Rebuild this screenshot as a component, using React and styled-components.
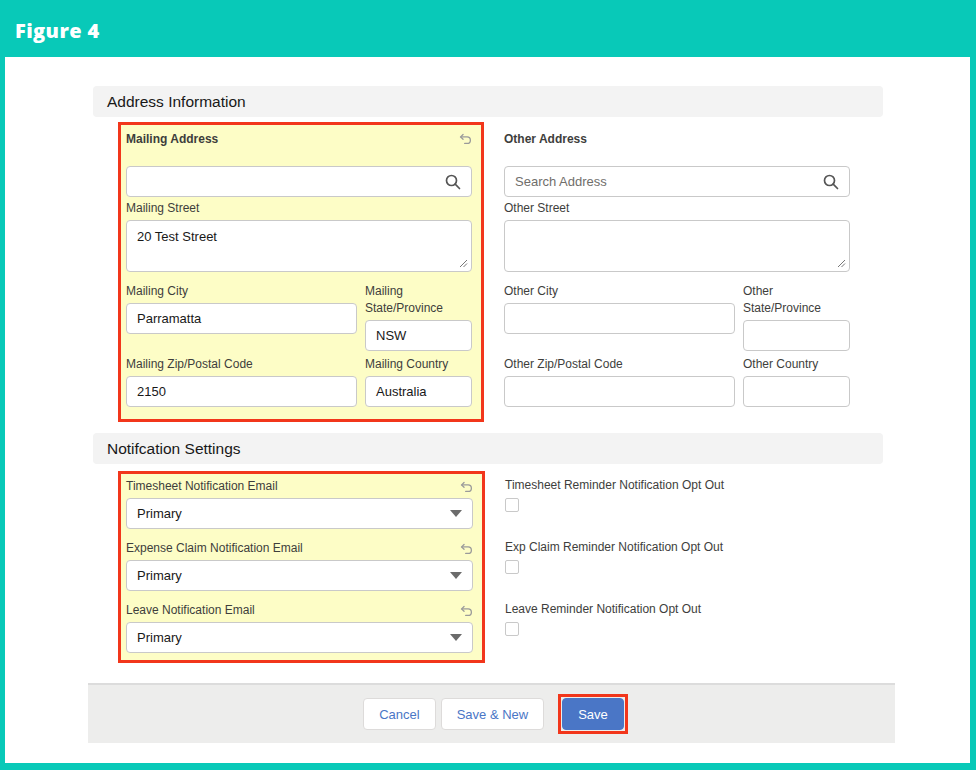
import React from 'react';
import styled, {createGlobalStyle, css} from 'styled-components';

const TEAL = '#08c9b8';
const RED = '#f2361b';

const Global = createGlobalStyle`
  html, body { margin: 0; padding: 0; background: #fff; }
  body { font-family: "Liberation Sans", Arial, sans-serif; color: #3e3e3c; }
`;

const Frame = styled.div`
  width: 976px;
  height: 770px;
  box-sizing: border-box;
  background: ${TEAL};
  padding: 4px 6px 7px 5px;
  display: flex;
  flex-direction: column;
`;

const FigureTitle = styled.div`
  height: 53px;
  padding-left: 10px;
  display: flex;
  align-items: center;
  color: #fff;
  font-family: "Open Sans", sans-serif;
  font-weight: 800;
  font-size: 20px;
  letter-spacing: 0.4px;
`;

const Sheet = styled.div`
  flex: 1;
  background: #fff;
  padding: 29px 0 0 83px;
`;

const Form = styled.div`
  width: 799px;
  display: flex;
  flex-direction: column;
`;

const SectionHead = styled.div`
  margin: 0 4px 0 5px;
  height: 31px;
  border-radius: 4px;
  background: #f3f3f3;
  display: flex;
  align-items: center;
  padding-left: 14px;
  font-size: 15.5px;
  color: #181818;
`;

const Columns = styled.div`
  display: flex;
  align-items: flex-start;
  gap: 20px;
  padding: ${({$pt}) => $pt}px 0 0 30px;
  margin-bottom: ${({$mb}) => $mb}px;
`;

const Box = styled.div`
  box-sizing: border-box;
  width: ${({$w}) => $w}px;
  padding: ${({$pt}) => $pt}px 9px ${({$pb}) => $pb}px 5px;
  border: 3px solid transparent;
  ${({$hl}) => $hl && css`
    background: #fdfdc6;
    border-color: ${RED};
  `}
`;

const PlainCol = styled.div`
  box-sizing: border-box;
  width: ${({$w}) => $w}px;
  padding-top: ${({$pt}) => $pt}px;
`;

const HeadRow = styled.div`
  height: 36px;
  display: flex;
  justify-content: space-between;
  align-items: flex-start;
  padding-top: 2px;
  box-sizing: border-box;
  font-size: 12px;
  font-weight: bold;
  color: #3e3e3c;
`;

const Label = styled.div`
  font-size: 12px;
  line-height: 17px;
  height: ${({$two}) => ($two ? 34 : 17)}px;
  color: #3e3e3c;
  margin: ${({$mt}) => $mt || 0}px 0 ${({$mb}) => ($mb === undefined ? 3 : $mb)}px;
  display: flex;
  justify-content: space-between;
  align-items: center;
`;

const Input = styled.div`
  box-sizing: border-box;
  height: ${({$h}) => $h || 31}px;
  background: #fff;
  border: 1px solid #c9c9c9;
  border-radius: 4px;
  padding: 0 10px;
  display: flex;
  align-items: ${({$top}) => ($top ? 'flex-start' : 'center')};
  padding-top: ${({$top}) => ($top ? 8 : 0)}px;
  justify-content: space-between;
  font-size: 13px;
  color: #181818;
  position: relative;
`;

const Placeholder = styled.span`
  color: #706e6b;
`;

const Grip = styled.svg`
  position: absolute;
  right: 3px;
  bottom: 3px;
`;

const SubGrid = styled.div`
  display: grid;
  grid-template-columns: 231px 107px;
  column-gap: 8px;
  row-gap: 5px;
  margin-top: 11px;
`;

const Field = styled.div`
  display: flex;
  flex-direction: column;
`;

const Check = styled.div`
  box-sizing: border-box;
  width: 14px;
  height: 14px;
  border: 1px solid #c9c9c9;
  border-radius: 2px;
  background: #fff;
  margin-bottom: 27px;
`;

const Footer = styled.div`
  margin-top: 20px;
  width: 799px;
  height: 58px;
  background: #ededec;
  border-top: 2px solid #dcdcdc;
  display: flex;
  justify-content: center;
  align-items: center;
  gap: 5px;
  padding-left: 8px;
  box-sizing: content-box;
`;

const Btn = styled.button`
  height: 32px;
  padding: 0 15px;
  border-radius: 4px;
  font-family: "Liberation Sans", Arial, sans-serif;
  font-size: 13px;
  border: 1px solid ${({$brand}) => ($brand ? '#4a76c6' : '#dddbda')};
  background: ${({$brand}) => ($brand ? '#4a76c6' : '#fff')};
  color: ${({$brand}) => ($brand ? '#fff' : '#4a76c6')};
`;

const Outlined = styled.div`
  border: 3px solid ${RED};
  padding: 1px;
  margin-left: 9px;
  display: flex;
`;

const Undo = () => (
  <svg width="13" height="13" viewBox="0 0 16 16" fill="none" stroke="#9a9a9a" strokeWidth="1.6" strokeLinecap="round">
    <path d="M5 3 L2 6 L5 9" />
    <path d="M2.5 6 H10 a4 4 0 0 1 0 8 H7" />
  </svg>
);

const Search = () => (
  <svg width="16" height="16" viewBox="0 0 16 16" fill="none" stroke="#555" strokeWidth="1.7">
    <circle cx="6.5" cy="6.5" r="5" />
    <path d="M10.2 10.2 L14.5 14.5" strokeLinecap="round" />
  </svg>
);

const Caret = () => (
  <svg width="12" height="8" viewBox="0 0 12 8"><path d="M0 0 H12 L6 7 Z" fill="#6b6b6b" /></svg>
);

const AddressFields = ({prefix, values, highlight}) => (
  <>
    <HeadRow>
      <span>{prefix} Address</span>
      {highlight && <Undo />}
    </HeadRow>
    <Input>
      {highlight ? <span /> : <Placeholder>Search Address</Placeholder>}
      <Search />
    </Input>
    <Label $mt={3}>{prefix} Street</Label>
    <Input $h={52} $top>
      {values.street}
      <Grip width="9" height="9" viewBox="0 0 9 9" stroke="#777" strokeWidth="1">
        <path d="M1 8 L8 1 M4.5 8 L8 4.5" />
      </Grip>
    </Input>
    <SubGrid>
      <Field>
        <Label>{prefix} City</Label>
        <Input>{values.city}</Input>
      </Field>
      <Field>
        <Label $two>{prefix}<br />State/Province</Label>
        <Input>{values.state}</Input>
      </Field>
      <Field>
        <Label>{prefix} Zip/Postal Code</Label>
        <Input>{values.zip}</Input>
      </Field>
      <Field>
        <Label>{prefix} Country</Label>
        <Input>{values.country}</Input>
      </Field>
    </SubGrid>
  </>
);

const emails = ['Timesheet Notification Email', 'Expense Claim Notification Email', 'Leave Notification Email'];
const optOuts = ['Timesheet Reminder Notification Opt Out', 'Exp Claim Reminder Notification Opt Out', 'Leave Reminder Notification Opt Out'];
const empty = {street: '', city: '', state: '', zip: '', country: ''};

export default function App() {
  return (
    <>
      <Global />
      <Frame>
        <FigureTitle>Figure 4</FigureTitle>
        <Sheet>
          <Form>
            <SectionHead>Address Information</SectionHead>
            <Columns $pt={5} $mb={11}>
              <Box $w={366} $hl $pt={5} $pb={12}>
                <AddressFields
                  prefix="Mailing"
                  highlight
                  values={{street: '20 Test Street', city: 'Parramatta', state: 'NSW', zip: '2150', country: 'Australia'}}
                />
              </Box>
              <PlainCol $w={346} $pt={8}>
                <AddressFields prefix="Other" values={empty} />
              </PlainCol>
            </Columns>
            <SectionHead>Notifcation Settings</SectionHead>
            <Columns $pt={7} $mb={0}>
              <Box $w={367} $hl $pt={4} $pb={7}>
                {emails.map((e, i) => (
                  <div key={e}>
                    <Label $mt={i ? 11 : 0}>{e}<Undo /></Label>
                    <Input>Primary<Caret /></Input>
                  </div>
                ))}
              </Box>
              <PlainCol $w={300} $pt={6}>
                {optOuts.map((o) => (
                  <div key={o}>
                    <Label $mb={4}>{o}</Label>
                    <Check />
                  </div>
                ))}
              </PlainCol>
            </Columns>
            <Footer>
              <Btn>Cancel</Btn>
              <Btn>Save &amp; New</Btn>
              <Outlined><Btn $brand>Save</Btn></Outlined>
            </Footer>
          </Form>
        </Sheet>
      </Frame>
    </>
  );
}
